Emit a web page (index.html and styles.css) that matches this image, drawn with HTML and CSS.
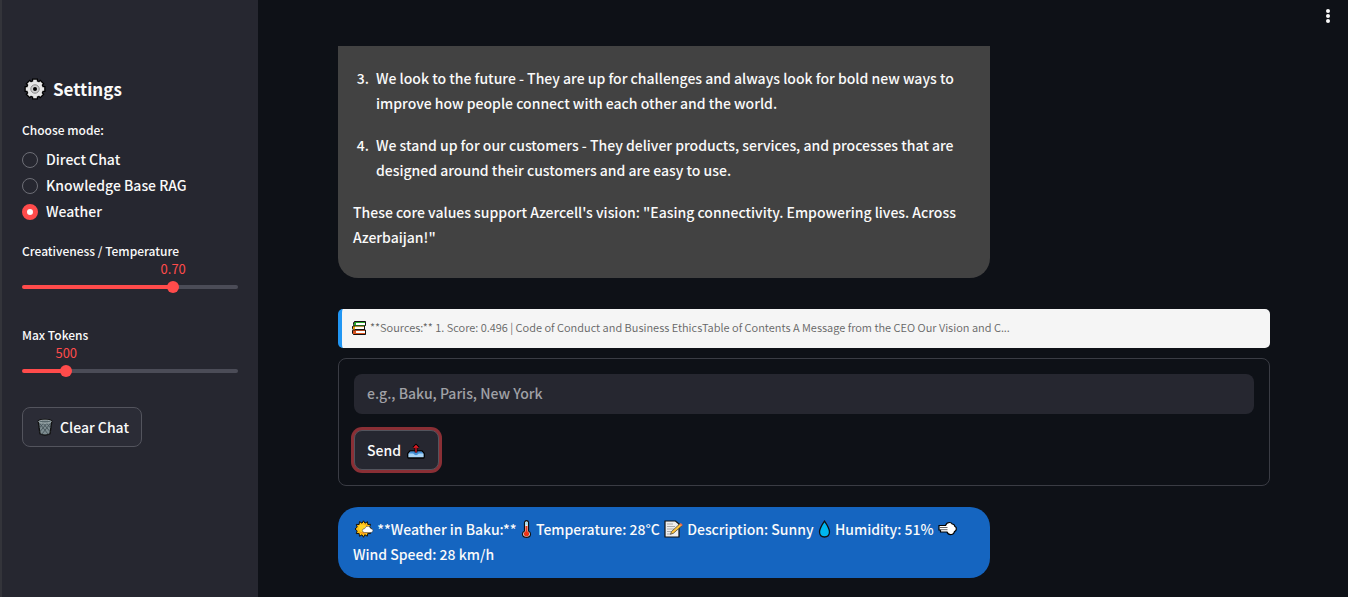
FILE: index.html
```html
<!DOCTYPE html>
<html lang="en">
<head>
<meta charset="utf-8">
<meta name="viewport" content="width=device-width, initial-scale=1">
<title>Chat</title>
<link rel="stylesheet" href="styles.css">
</head>
<body>
<div class="app">
  <aside class="sidebar">
    <h2 class="title">
      <svg class="gear" viewBox="0 0 22 22" aria-hidden="true">
        <g stroke="#000" stroke-width="6" stroke-linecap="butt"><circle cx="11" cy="11" r="6" fill="#000"/><path d="M11 .5v21M.5 11h21M3.600 3.600l14.800 14.800M18.400 3.600L3.600 18.400"/></g>
        <g stroke="#e6e6e6" stroke-width="3.600"><circle cx="11" cy="11" r="6" fill="#e6e6e6"/><path d="M11 1.800v18.400M1.800 11h18.400M4.500 4.500l13 13M17.500 4.500l-13 13"/></g>
        <circle cx="11" cy="11" r="4.200" fill="#d0d0d0" stroke="#8a8a8a"/>
        <circle cx="11" cy="11" r="2" fill="#000"/>
      </svg>
      Settings
    </h2>

    <fieldset class="modes">
      <legend>Choose mode:</legend>
      <label><input type="radio" name="mode">Direct Chat</label>
      <label><input type="radio" name="mode">Knowledge Base RAG</label>
      <label><input type="radio" name="mode" checked>Weather</label>
    </fieldset>

    <div class="slider" style="--fill: 70%">
      <label for="temperature">Creativeness / Temperature</label>
      <output for="temperature">0.70</output>
      <div class="track"><input id="temperature" type="range" min="0" max="1" step="0.05" value="0.7"></div>
    </div>

    <div class="slider" style="--fill: 20.5%">
      <label for="tokens">Max Tokens</label>
      <output for="tokens">500</output>
      <div class="track"><input id="tokens" type="range" min="100" max="2048" step="1" value="500"></div>
    </div>

    <button class="button" type="button">
      <svg class="emoji" viewBox="0 0 18 20" aria-hidden="true">
        <path d="M1.500 3.500C3 1 15 1 16.500 3.500L14.600 17.500Q9 20.500 3.400 17.500z" fill="#7d8c90" stroke="#111" stroke-width="1.500"/>
        <path d="M3 6l9.500 12M7 6l7.500 9M11 6l4 5M15 6L5.500 18M11 6l-7.500 9M7 6l-4 5" stroke="#46545a" stroke-width="1" fill="none"/>
        <ellipse cx="9" cy="4" rx="7" ry="1.600" fill="#56666b" stroke="#aab5b8"/>
      </svg>
      Clear Chat
    </button>
  </aside>

  <div class="page">
    <header class="toolbar">
      <button class="menu" type="button" aria-label="Main menu">
        <svg viewBox="0 0 16 16" fill="#fafafa" aria-hidden="true"><circle cx="8" cy="3" r="2"/><circle cx="8" cy="8" r="2"/><circle cx="8" cy="13" r="2"/></svg>
      </button>
    </header>

    <main class="content">
      <article class="bubble bot">
        <ol start="3">
          <li>We look to the future - They are up for challenges and always look for bold new ways to improve how people connect with each other and the world.</li>
          <li>We stand up for our customers - They deliver products, services, and processes that are designed around their customers and are easy to use.</li>
        </ol>
        <p>These core values support Azercell's vision: "Easing connectivity. Empowering lives. Across Azerbaijan!"</p>
      </article>

      <div class="sources">
        <svg viewBox="0 0 14 14" aria-hidden="true">
          <path d="M2.500.5h11v4h-1v4.500h1v4.500h-12L.5 12V9.500L1.500 9 .5 7.500v-2L2 4.500 1.500 2z" fill="#111" stroke="#111"/>
          <path d="M4 2h9v2H4zM3 6h9v2H3zM4 10h9v2H4z" fill="#fff"/>
          <path d="M2 1.500h2v3H2zM3 1h10v1H3zM3 4h10v.6H3z" fill="#2aa52a"/>
          <path d="M1 5.500h2v3H1z" fill="#f2a20c"/><path d="M3 5.300h9v.8H3z" fill="#f6c35a"/>
          <path d="M1 9.500h3v3.500H1zM3 9.300h10v.8H3zM3 12h10v1H3z" fill="#d9531e"/>
        </svg>
        <span>**Sources:** 1. Score: 0.496 | Code of Conduct and Business EthicsTable of Contents A Message from the CEO Our Vision and C...</span>
      </div>

      <form class="ask">
        <input type="text" placeholder="e.g., Baku, Paris, New York" aria-label="City">
        <button class="button focused" type="button">
          Send
          <svg class="emoji" viewBox="0 0 18 18" aria-hidden="true">
            <path d="M3 10h12l2.300 2.500V16q0 1-1 1H1.700q-1 0-1-1v-3.500z" fill="#a9d4f5" stroke="#000" stroke-width="1.300"/>
            <path d="M3.500 10.600h11l1.800 1.900h-4.500Q9 16 6.200 12.500H1.700z" fill="#438fd6"/>
            <path d="M9 11.500V5M6.500 7L9 4.500 11.500 7" fill="none" stroke="#000" stroke-width="2.800"/>
            <path d="M9 11.500V5M6.700 7L9 4.700 11.300 7" fill="none" stroke="#e01b24" stroke-width="1.300"/>
          </svg>
        </button>
      </form>

      <article class="bubble user">
        <svg class="wide" viewBox="0 0 20 18" aria-hidden="true">
          <path d="M10 .8l1.500 2.400 2.500-1.500.3 2.800 2.800-.2-.9 2.500L18.500 9l-2.300 2 .9 2.500-2.800-.1-.5 2.800-2.500-1.500L10 17.300l-1.500-2.500L6 16.300l-.4-2.900-2.800.2.900-2.700L1.500 9l2.200-1.900-.9-2.700 2.800.1.400-2.900 2.500 1.600z" fill="#ffc414" stroke="#111" stroke-width="1"/>
          <circle cx="10" cy="9" r="4.900" fill="#f7941d"/><circle cx="9.200" cy="8.300" r="4" fill="#ffd426"/>
          <path d="M11 12.500q-2.400-.2-2.200-2.200.4-1.800 2.400-1.700 1-2.900 3.600-2.300 2 .4 2.300 2.300 2.500.1 2.400 2.200-.2 1.600-2.100 1.700z" fill="#fff" stroke="#333" stroke-width=".5"/>
        </svg>
        **Weather in Baku:**
        <svg class="narrow" viewBox="0 0 13 18" aria-hidden="true">
          <path d="M4.500 3q0-2.300 2-2.300t2 2.300v8q2 1 2 3 0 3.400-4 3.400t-4-3.400q0-2 2-3z" fill="#e8eef0" stroke="#111" stroke-width="1.200"/>
          <circle cx="6.500" cy="13.800" r="2.600" fill="#e83418"/><path d="M5.500 6h2v7h-2z" fill="#e83418"/><path d="M5.300 2h2.400v3H5.300z" fill="#9edcf4"/>
        </svg>
        Temperature: 28°C
        <svg class="wide" viewBox="0 0 20 18" aria-hidden="true">
          <path d="M1.500 1H12l3.500 3v13h-14z" fill="#eee" stroke="#111" stroke-width="1.200"/>
          <path d="M3.500 4h6M3.500 6.500h8M3.500 9h7M3.500 11.500h4M3.500 14h4" stroke="#aaa" stroke-width="1"/>
          <path d="M7 14.300L8 11.500l8.700-8 2 2L10 13.200z" fill="#ffc43a" stroke="#333" stroke-width=".7"/><path d="M16 4.200L17.300 3l2 2L18 6.200z" fill="#ef6c4d"/>
        </svg>
        Description: Sunny
        <svg class="drop" viewBox="0 0 15 18" aria-hidden="true"><path d="M7.500 1.200Q12.300 8 12.500 12q-.2 5-5 5t-5-5Q2.700 8 7.500 1.200z" fill="#00b7ef" stroke="#111" stroke-width="1.300"/></svg>
        Humidity: 51%
        <svg class="wide" viewBox="0 0 20 18" aria-hidden="true">
          <path d="M1.500 5.500H8Q9 2.500 12 2.500q2 0 2.700 1.500 2.300.1 2.600 2.300 2 1 1.500 3Q18.500 11 17 11.500q-.5 2.800-3 3-3.500.5-4.500-2.500H3v-2H1.500V8z" fill="#fff" stroke="#000" stroke-width="1.200"/>
          <path d="M2 7.500h8M2.500 9.700H10" stroke="#666" stroke-width="1"/>
        </svg>
        Wind Speed: 28 km/h
      </article>
    </main>
  </div>
</div>
</body>
</html>
```

FILE: styles.css
```css
* { box-sizing: border-box; }

body {
  margin: 0;
  background: #0e1117;
  color: #fafafa;
  font: 500 14px/25px "Noto Sans CJK SC", "Noto Sans", sans-serif;
}

button, input { font: inherit; color: inherit; }

.app { display: flex; min-height: 100vh; }

.sidebar {
  flex: 0 0 258px;
  padding: 76px 20px 20px;
  background: #262730;
  border-left: 2px solid #33343a;
}

.title {
  display: flex;
  align-items: center;
  gap: 7px;
  margin: 0 0 15px;
  font-size: 17px;
  line-height: 26px;
  font-weight: 700;
}
.gear { width: 22px; height: 22px; margin-left: 2px; }

.modes { margin: 0 0 17px; padding: 0; border: 0; }
.modes legend { padding: 0; margin-bottom: 5px; font-size: 12px; }
.modes label { display: flex; align-items: center; gap: 8px; height: 25px; }
.modes label + label { margin-top: 1px; }
.modes input {
  appearance: none;
  width: 16px;
  height: 16px;
  margin: 0;
  border: 1px solid #6d6e76;
  border-radius: 50%;
}
.modes input:checked { border: 5px solid #ff4b4b; background: #fafafa; }

.slider { margin-bottom: 34px; font-size: 12px; }
.slider label { display: block; line-height: 20px; }
.slider output {
  display: block;
  width: 40px;
  margin-left: calc(var(--fill) - 20px);
  color: #ff4b4b;
  font-weight: 400;
  font-size: 13px;
  text-align: center;
  line-height: 16px;
}
.track {
  height: 4px;
  margin: 8px 0 0;
  border-radius: 2px;
  background: linear-gradient(to right, #ff4b4b var(--fill), #4b4c57 var(--fill));
}
.slider + .slider { padding-top: 2px; }
.track input {
  appearance: none;
  display: block;
  width: calc(100% + 12px);
  height: 4px;
  margin: 0 -6px;
  background: transparent;
}
.track input::-webkit-slider-thumb {
  appearance: none;
  width: 12px;
  height: 12px;
  border-radius: 50%;
  background: #ff4b4b;
}

.button {
  display: inline-flex;
  align-items: center;
  gap: 5px;
  height: 40px;
  padding: 0 12px;
  border: 1px solid #53545d;
  border-radius: 8px;
  background: #2b2c36;
}
.focused { background: #262730; box-shadow: 0 0 0 3px #8a2f35; }
.emoji { width: 20px; height: 18px; }

.page { flex: 1; min-width: 0; }
.toolbar { display: flex; justify-content: flex-end; height: 46px; padding: 8px 12px; }
.menu { width: 16px; height: 16px; padding: 0; border: 0; background: none; }
.menu svg { display: block; }

.content { padding: 0 78px 19px 80px; }

.bubble { width: 70%; border-radius: 20px; }
.bot {
  margin-bottom: 31px;
  padding: 20px 15px 28px;
  border-radius: 0 0 20px 20px;
  background: #424242;
}
.bot ol { margin: 0; padding-left: 19px; }
.bot li { margin-bottom: 17px; padding-left: 4px; }
.bot p { margin: 0; }

.sources {
  display: flex;
  align-items: center;
  gap: 4px;
  margin-bottom: 10px;
  padding: 6px 10px 8px;
  border-left: 4px solid #2196f3;
  border-radius: 5px;
  background: #f5f5f5;
  color: #666;
  font-size: 11px;
  font-weight: 350;
}
.sources svg { flex: none; width: 14px; height: 14px; }

.ask {
  display: flex;
  flex-direction: column;
  align-items: flex-start;
  gap: 16px;
  margin-bottom: 21px;
  padding: 15px;
  border: 1px solid #3a3c44;
  border-radius: 8px;
}
.ask input {
  width: 100%;
  height: 40px;
  padding: 0 13px 2px;
  border: 0;
  border-radius: 8px;
  background: #262730;
}
.ask input::placeholder { color: #a0a1a6; opacity: 1; }

.user { padding: 10px 15px 11px; background: #1565c0; }
.user svg { height: 18px; vertical-align: -3px; }
.wide { width: 21px; }
.narrow { width: 13px; }
.drop { width: 15px; }
```
